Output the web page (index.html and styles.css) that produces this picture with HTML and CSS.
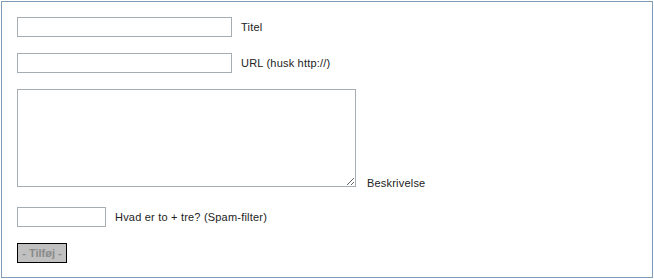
FILE: index.html
```html
<!DOCTYPE html>
<html>

<head>
    <title>Tilføj link</title>
    <link rel="stylesheet" href="styles.css">
</head>

<body>
    <form class="linkform" onsubmit="return false">
        <div class="row">
            <input type="text" class="field field-wide" name="titel">
            <label class="label">Titel</label>
        </div>
        <div class="row">
            <input type="text" class="field field-wide" name="url">
            <label class="label">URL (husk http://)</label>
        </div>
        <div class="row row-bottom">
            <textarea class="field field-area" name="beskrivelse"></textarea>
            <label class="label">Beskrivelse</label>
        </div>
        <div class="row row-spam">
            <input type="text" class="field field-small" name="spam">
            <label class="label">Hvad er to + tre? (Spam-filter)</label>
        </div>
        <div class="row">
            <button class="submit" disabled>- Tilføj -</button>
        </div>
    </form>
</body>

</html>
```

FILE: styles.css
```css
body {
    margin: 0;
    font-family: "Liberation Sans", Arial, sans-serif;
    font-size: 11px;
    color: #222;
    background: #fff;
}

.linkform {
    margin: 1px;
    width: 652px;
    height: 277px;
    box-sizing: border-box;
    border: 1px solid #7f9db9;
    padding: 15px;
}

.row {
    display: flex;
    align-items: center;
    gap: 9px;
    margin-bottom: 16px;
}

.row-bottom {
    align-items: flex-end;
}

.row-spam {
    margin-top: 20px;
}

.label {
    letter-spacing: 0.2px;
}

.field {
    box-sizing: border-box;
    height: 20px;
    margin: 0;
    padding: 2px;
    border: 1px solid #a5acb2;
    font-family: inherit;
    font-size: 11px;
}

.field-wide {
    width: 215px;
}

.field-area {
    width: 339px;
    height: 98px;
    resize: both;
}

.field-small {
    width: 89px;
}

.row-bottom .label {
    margin-left: 2px;
    margin-bottom: -2px;
}

.submit {
    box-sizing: border-box;
    width: 50px;
    height: 20px;
    padding: 0;
    border: 1px solid #000;
    background: #c0c0c0;
    color: #8a8a8a;
    font-family: inherit;
    font-size: 11px;
    font-weight: bold;
}
```
